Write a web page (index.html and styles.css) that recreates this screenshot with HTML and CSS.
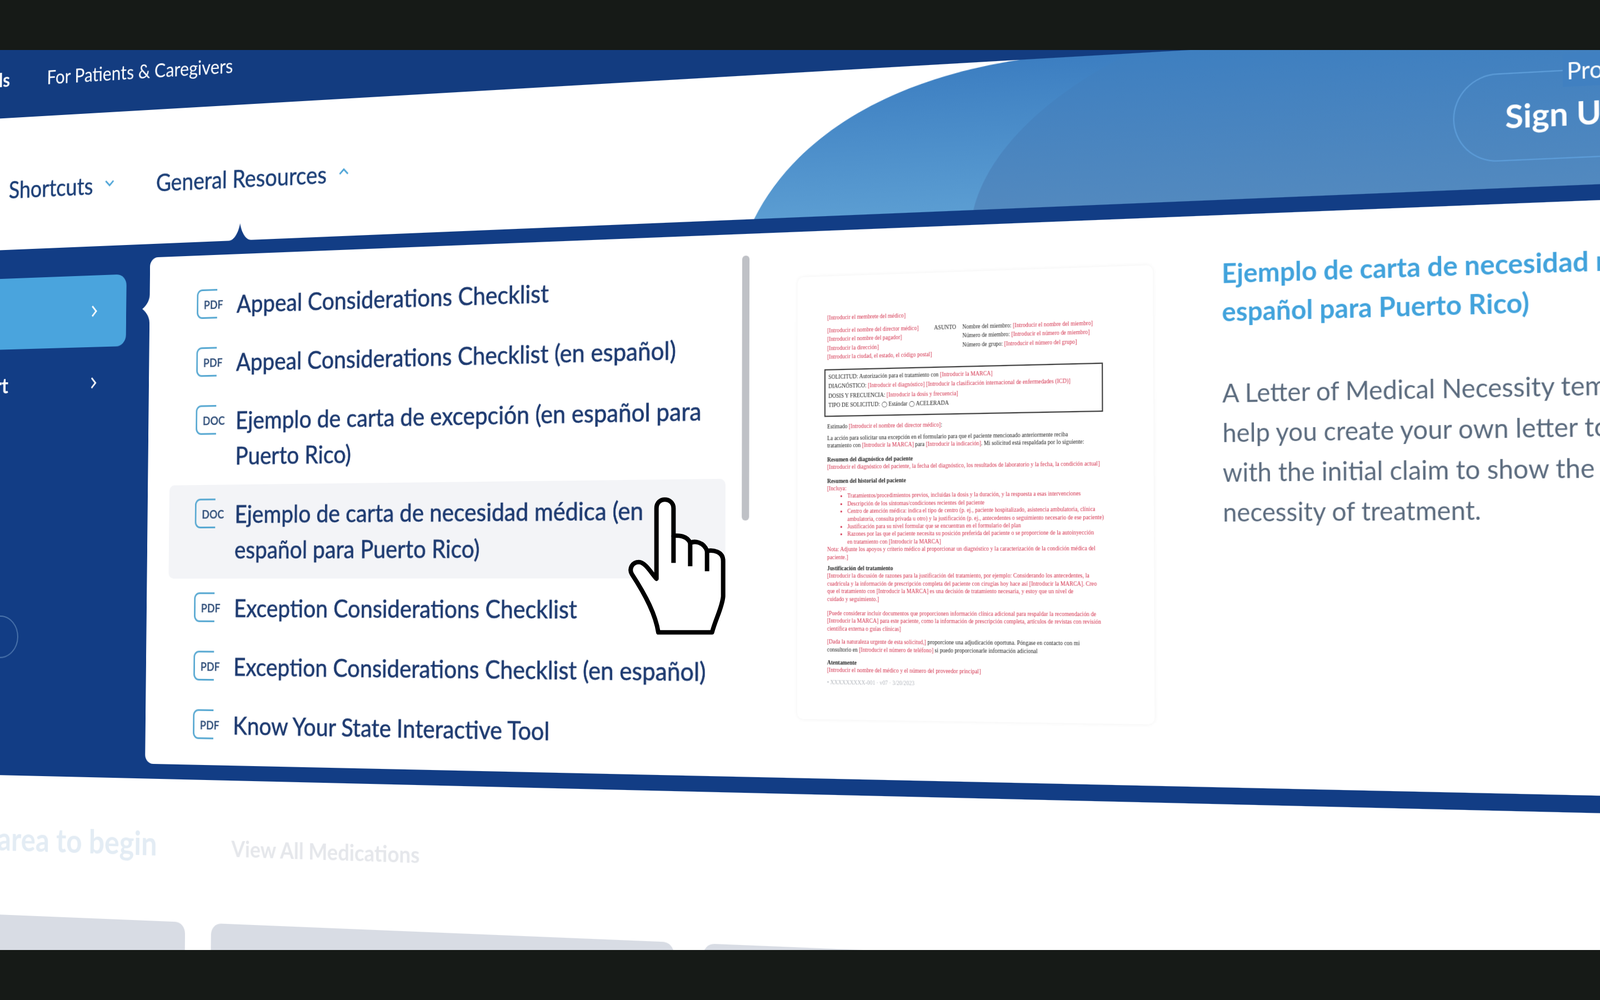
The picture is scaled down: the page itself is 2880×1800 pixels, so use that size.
FILE: index.html
```html
<!DOCTYPE html>
<html>
    <head>
        <meta charset="utf-8">
        <title>General Resources</title>
        <link rel="stylesheet" href="styles.css">
    </head>
    <body>
        <div class="band"></div>
        <div class="stage">
            <div class="page">
                <div class="topbar">
                    <span class="toplink strong">Professionals</span>
                    <span class="toplink">For Patients &amp; Caregivers</span>
                </div>
                <div class="nav">
                    <svg class="arc" viewBox="0 0 3180 239" width="3180" height="239">
                        <defs>
                            <linearGradient id="arcA" x1="0" y1="0" x2="0" y2="1">
                                <stop offset="0" stop-color="#3c7ec1"/>
                                <stop offset="1" stop-color="#5b9dd2"/>
                            </linearGradient>
                            <linearGradient id="arcB" x1="0" y1="0" x2="0" y2="1">
                                <stop offset="0" stop-color="#3e7fc0"/>
                                <stop offset="1" stop-color="#5289bf"/>
                            </linearGradient>
                        </defs>
                        <path d="M1700 239C1770 110 1930 20 2159 0L3180 0L3180 239Z" fill="url(#arcA)"/>
                        <path d="M2080 239C2100 160 2180 70 2340 0L3180 0L3180 239Z" fill="url(#arcB)"/>
                    </svg>
                    <div class="navitem first">Shortcuts
                        <svg class="chev" viewBox="0 0 20 12" width="20" height="12"><path d="M2 2l8 8 8-8"/></svg>
                    </div>
                    <div class="navitem">General Resources
                        <svg class="chev" viewBox="0 0 20 12" width="20" height="12"><path d="M2 10l8-8 8 8"/></svg>
                    </div>
                    <div class="signup">
                        <span class="signup-text">Sign Up</span>
                        <span class="signup-label">Provider</span>
                    </div>
                    <svg class="notch-top" viewBox="0 0 45 30" width="45" height="30"><path d="M0 30C12 30 20 14 22.500 0C25 14 33 30 45 30Z"/></svg>
                </div>
                <div class="menu">
                    <div class="side">
                        <div class="siderow active">
                            <svg class="side-chev" viewBox="0 0 12 22" width="12" height="22"><path d="M2 2l8 9-8 9"/></svg>
                        </div>
                        <div class="siderow">
                            <span>Support</span>
                            <svg class="side-chev" viewBox="0 0 12 22" width="12" height="22"><path d="M2 2l8 9-8 9"/></svg>
                        </div>
                        <div class="circle"></div>
                    </div>
                    <div class="panel">
                        <svg class="notch-left" viewBox="0 0 15 50" width="15" height="50"><path d="M15 0C15 12 5 22 0 25C5 28 15 38 15 50Z"/></svg>
                        <div class="list">
                            <div class="row"><div class="ico"><span>PDF</span></div><div class="label">Appeal Considerations Checklist</div></div>
                            <div class="row"><div class="ico"><span>PDF</span></div><div class="label">Appeal Considerations Checklist (en español)</div></div>
                            <div class="row"><div class="ico"><span>DOC</span></div><div class="label">Ejemplo de carta de excepción (en español para<br>Puerto Rico)</div></div>
                            <div class="row hover"><div class="ico"><span>DOC</span></div><div class="label">Ejemplo de carta de necesidad médica (en<br>español para Puerto Rico)</div></div>
                            <div class="row"><div class="ico"><span>PDF</span></div><div class="label">Exception Considerations Checklist</div></div>
                            <div class="row"><div class="ico"><span>PDF</span></div><div class="label">Exception Considerations Checklist (en español)</div></div>
                            <div class="row"><div class="ico"><span>PDF</span></div><div class="label">Know Your State Interactive Tool</div></div>
                        </div>
                        <div class="scroll"></div>
                        <div class="doc">
                            <div class="l r memb">[Introducir el membrete del médico]</div>
                            <div class="dhead">
                                <div class="dleft">
                                    <div class="l r">[Introducir el nombre del director médico]</div>
                                    <div class="l r">[Introducir el nombre del pagador]</div>
                                    <div class="l r">[Introducir la dirección]</div>
                                    <div class="l r">[Introducir la ciudad, el estado, el código postal]</div>
                                </div>
                                <div class="dsubject"><div class="l">ASUNTO</div></div>
                                <div class="dright">
                                    <div class="l">Nombre del miembro: <span class="r">[Introducir el nombre del miembro]</span></div>
                                    <div class="l">Número de miembro: <span class="r">[Introducir el número de miembro]</span></div>
                                    <div class="l">Número de grupo: <span class="r">[Introducir el número del grupo]</span></div>
                                </div>
                            </div>
                            <div class="dbox">
                                <div class="l">SOLICITUD: Autorización para el tratamiento con <span class="r">[Introducir la MARCA]</span></div>
                                <div class="l">DIAGNÓSTICO: <span class="r">[Introducir el diagnóstico] [Introducir la clasificación internacional de enfermedades (ICD)]</span></div>
                                <div class="l">DOSIS Y FRECUENCIA: <span class="r">[Introducir la dosis y frecuencia]</span></div>
                                <div class="l">TIPO DE SOLICITUD: ◯ Estándar ◯ ACELERADA</div>
                            </div>
                            <div class="p m10">Estimado <span class="r">[Introducir el nombre del director médico]</span>:</div>
                            <div class="p m7">La acción para solicitar una excepción en el formulario para que el paciente mencionado anteriormente reciba</div>
                            <div class="p">tratamiento con <span class="r">[Introducir la MARCA]</span> para <span class="r">[Introducir la indicación]</span>. Mi solicitud está respaldada por lo siguiente:</div>
                            <div class="p m10 b">Resumen del diagnóstico del paciente</div>
                            <div class="p r">[Introducir el diagnóstico del paciente, la fecha del diagnóstico, los resultados de laboratorio y la fecha, la condición actual]</div>
                            <div class="p m10 b">Resumen del historial del paciente</div>
                            <div class="p r">[Incluya:</div>
                            <ul class="dlist r">
                                <li>Tratamientos/procedimientos previos, incluidas la dosis y la duración, y la respuesta a esas intervenciones</li>
                                <li>Descripción de los síntomas/condiciones recientes del paciente</li>
                                <li>Centro de atención médica: indica el tipo de centro (p. ej., paciente hospitalizado, asistencia ambulatoria, clínica<br>ambulatoria, consulta privada u otro) y la justificación (p. ej., antecedentes o seguimiento necesario de ese paciente)</li>
                                <li>Justificación para su nivel formular que se encuentran en el formulario del plan</li>
                                <li>Razones por las que el paciente necesita su posición preferida del paciente o se proporcione de la autoinyección<br>en tratamiento con [Introducir la MARCA]</li>
                            </ul>
                            <div class="p r">Nota: Adjunte los apoyos y criterio médico al proporcionar un diagnóstico y la caracterización de la condición médica del</div>
                            <div class="p r">paciente.]</div>
                            <div class="p m6 b">Justificación del tratamiento</div>
                            <div class="p r">[Introducir la discusión de razones para la justificación del tratamiento, por ejemplo: Considerando los antecedentes, la</div>
                            <div class="p r">cuadrícula y la información de prescripción completa del paciente con cirugías hoy hace así [Introducir la MARCA]. Creo</div>
                            <div class="p r">que el tratamiento con [Introducir la MARCA] es una decisión de tratamiento necesaria, y estoy que un nivel de</div>
                            <div class="p r">cuidado y seguimiento.]</div>
                            <div class="p m11 r">[Puede considerar incluir documentos que proporcionen información clínica adicional para respaldar la recomendación de</div>
                            <div class="p r">[Introducir la MARCA] para este paciente, como la información de prescripción completa, artículos de revistas con revisión</div>
                            <div class="p r">científica externa o guías clínicas]</div>
                            <div class="p m9"><span class="r">[Dada la naturaleza urgente de esta solicitud,]</span> proporcione una adjudicación oportuna. Póngase en contacto con mi</div>
                            <div class="p">consultorio en <span class="r">[Introducir el número de teléfono]</span> si puedo proporcionarle información adicional</div>
                            <div class="p m9 b">Atentamente</div>
                            <div class="p r">[Introducir el nombre del médico y el número del proveedor principal]</div>
                            <div class="p m7 g">• XXXXXXXXX-001 · v07 · 3/20/2023</div>
                        </div>
                        <div class="detail">
                            <div class="detail-title">Ejemplo de carta de necesidad médica (en<br>español para Puerto Rico)</div>
                            <div class="detail-text">A Letter of Medical Necessity template can<br>help you create your own letter to send<br>with the initial claim to show the medical<br>necessity of treatment.</div>
                        </div>
                    </div>
                </div>
                <div class="below">
                    <div class="below-head">
                        <div class="begin">Select a therapeutic area to begin</div>
                        <div class="viewall">View All Medications</div>
                    </div>
                    <div class="cards">
                        <div class="card"></div>
                        <div class="card"></div>
                        <div class="card"></div>
                    </div>
                </div>
            </div>
            <svg class="hand" viewBox="0 0 900 900" width="300" height="300">
                <path class="hand-out" d="M395 545L395 165C395 135 415 118 440 118C465 118 487 135 487 165L487 312C510 312 560 310 577 352C600 340 650 345 668 395C700 390 755 395 755 450L755 640C750 700 715 760 695 835L405 835C390 740 340 640 262 520C245 490 265 455 300 455C335 455 370 520 395 545Z"/>
                <path class="hand-in" d="M487 312V460M577 352V478M668 395V505"/>
            </svg>
        </div>
        <div class="band"></div>
    </body>
</html>
```

FILE: styles.css
```css
html,body{
    margin:0;
    padding:0;
    background:#161a17;
}
body{
    width:2880px;
    height:1800px;
    overflow:hidden;
    display:flex;
    flex-direction:column;
    font-family:"Lato","Liberation Sans",sans-serif;
}
.band{
    height:90px;
    flex:none;
    background:#161a17;
}
.stage{
    height:1620px;
    flex:none;
    position:relative;
    overflow:hidden;
    background:#fff;
}
/* the whole site sits on a tilted plane */
.page{
    position:absolute;
    left:0;
    top:0;
    width:3180px;
    height:1750px;
    display:flex;
    flex-direction:column;
    background:#fff;
    transform-origin:0 0;
    transform:translateY(-90px) matrix3d(.845,-.0611,0,-.0000582, -.012,.98762,0,-.0000077, 0,0,1,0, 9,2.29,0,1) translateX(-240px);
    filter:blur(.6px);
}
.topbar{
    height:213px;
    flex:none;
    box-sizing:border-box;
    background:#133c80;
    display:flex;
    align-items:flex-start;
    gap:78px;
    padding-top:112px;
    padding-left:50px;
    color:#fff;
    font-size:34.500px;
    line-height:62px;
}
.toplink{
    white-space:nowrap;
}
.strong{
    font-weight:700;
}
.nav{
    height:239px;
    flex:none;
    position:relative;
    display:flex;
    align-items:flex-start;
    background:#fff;
}
.arc{
    position:absolute;
    left:0;
    top:0;
}
.navitem{
    position:relative;
    display:flex;
    align-items:center;
    gap:24px;
    margin-top:100px;
    height:60px;
    font-size:42px;
    color:#1c3f77;
    white-space:nowrap;
    -webkit-text-stroke:.5px #1c3f77;
}
.navitem.first{
    margin-left:253px;
    margin-right:86px;
}
.chev{
    fill:none;
    stroke:#4ba3d6;
    stroke-width:3;
    margin-top:-6px;
}
.signup{
    position:relative;
    margin-left:auto;
    margin-top:63px;
    width:329px;
    height:135px;
    box-sizing:border-box;
    border:2.500px solid #5c9cd8;
    border-right:none;
    border-radius:68px 0 0 68px;
    padding-left:77px;
    line-height:129px;
    color:#fff;
}
.signup-text{
    font-size:50px;
    font-weight:700;
}
.signup-label{
    position:absolute;
    left:164px;
    top:-26px;
    padding-left:6px;
    line-height:50px;
    font-size:36px;
    background:#4080c1;
}
.notch-top{
    position:absolute;
    left:708px;
    bottom:0;
    fill:#123d85;
}
.menu{
    height:943px;
    flex:none;
    box-sizing:border-box;
    display:flex;
    padding-top:24px;
    background:#123d85;
}
.side{
    width:549px;
    flex:none;
    display:flex;
    flex-direction:column;
    padding-top:28px;
    box-sizing:border-box;
}
.siderow{
    width:501px;
    height:128px;
    flex:none;
    box-sizing:border-box;
    display:flex;
    justify-content:flex-end;
    align-items:center;
    gap:172px;
    padding-right:60px;
    color:#fff;
    font-size:38px;
    font-weight:700;
    border-radius:0 20px 20px 0;
}
.siderow.active{
    background:#4aa4dd;
}
.side-chev{
    fill:none;
    stroke:#fff;
    stroke-width:3;
}
.circle{
    width:76px;
    height:76px;
    margin-top:350px;
    margin-left:208px;
    box-sizing:border-box;
    border:2px solid #4d76ad;
    border-radius:50%;
}
.panel{
    position:relative;
    flex:1;
    height:893px;
    display:flex;
    align-items:flex-start;
    background:#fff;
    border-radius:16px 0 0 16px;
}
.notch-left{
    position:absolute;
    left:-15px;
    top:66px;
    fill:#fff;
}
.list{
    width:1057px;
    flex:none;
    margin-left:44px;
    margin-top:36px;
}
.row{
    display:flex;
    align-items:flex-start;
    gap:21px;
    padding:20px 0 20px 52px;
    border-radius:10px;
}
.row.hover{
    background:#f3f4f7;
}
.label{
    font-size:42.600px;
    line-height:62px;
    white-space:nowrap;
    color:#1d3a70;
    -webkit-text-stroke:.6px #1d3a70;
}
.ico{
    position:relative;
    width:59px;
    height:50px;
    flex:none;
    margin-top:4px;
}
.ico::before{
    content:"";
    position:absolute;
    left:0;
    top:0;
    width:38px;
    height:46px;
    border:3px solid #59a9d2;
    border-right:none;
    border-radius:11px 0 0 11px;
}
.ico span{
    position:absolute;
    left:14px;
    top:15px;
    font-size:20px;
    line-height:24px;
    font-weight:700;
    color:#34527c;
    background:#fff;
}
.row.hover .ico span{
    background:#f3f4f7;
}
.scroll{
    width:13px;
    height:437px;
    flex:none;
    margin-top:36px;
    margin-left:29px;
    border-radius:6px;
    background:#bfc1c6;
}
.doc{
    width:600px;
    height:722px;
    flex:none;
    box-sizing:border-box;
    margin-top:75px;
    margin-left:85px;
    padding:61px 87px 0 52px;
    border-radius:10px;
    box-shadow:0 0 7px rgba(0,0,0,.06);
    font-family:"Liberation Serif",serif;
    font-size:9.300px;
    color:#222;
}
.doc>*{
    filter:blur(.6px);
}
.l{
    line-height:14.500px;
    white-space:nowrap;
}
.p{
    line-height:12.400px;
    white-space:nowrap;
}
.r{
    color:#d3304c;
}
.b{
    font-weight:700;
    color:#222;
}
.g{
    color:#b5b9bf;
}
.m6{
    margin-top:6px;
}
.m7{
    margin-top:7px;
}
.m9{
    margin-top:9px;
}
.m10{
    margin-top:10px;
}
.m11{
    margin-top:11px;
}
.memb{
    margin-bottom:6px;
}
.dhead{
    display:flex;
    align-items:flex-start;
    height:58px;
}
.dleft{
    width:184px;
    flex:none;
}
.dsubject{
    width:48px;
    flex:none;
}
.dbox{
    box-sizing:border-box;
    height:78px;
    margin:12px -5px 0 -5px;
    padding:4px 6px 0 5px;
    border:2px solid #444;
}
.dbox .l{
    line-height:15.500px;
}
.dlist{
    margin:0;
    padding:0 0 0 35px;
    line-height:12.400px;
    white-space:nowrap;
}
.detail{
    flex:none;
    margin-top:61px;
    margin-left:111px;
    white-space:nowrap;
}
.detail-title{
    font-size:42px;
    line-height:60px;
    font-weight:700;
    color:#42a3dc;
}
.detail-text{
    margin-top:67px;
    font-size:40px;
    line-height:62px;
    color:#5b6b7e;
}
.below{
    flex:1;
    position:relative;
    overflow:hidden;
    background:#fff;
}
.below-head{
    display:flex;
    align-items:flex-start;
    margin-top:78px;
    white-space:nowrap;
}
.begin{
    width:575px;
    flex:none;
    display:flex;
    justify-content:flex-end;
    font-size:57px;
    line-height:68px;
    font-weight:700;
    color:#e3ecf4;
}
.viewall{
    margin-left:149px;
    margin-top:5px;
    font-size:39px;
    line-height:68px;
    font-weight:700;
    color:#e5e7eb;
}
.cards{
    position:absolute;
    top:248px;
    left:-242px;
    display:flex;
    gap:52px;
}
.card{
    width:875px;
    height:300px;
    flex:none;
    border-radius:20px 20px 0 0;
    background:#d8dce4;
}
.hand{
    position:absolute;
    left:1050px;
    top:770px;
}
.hand-out{
    fill:#fff;
    stroke:#000;
    stroke-width:24;
    stroke-linejoin:round;
}
.hand-in{
    fill:none;
    stroke:#000;
    stroke-width:24;
}
```
